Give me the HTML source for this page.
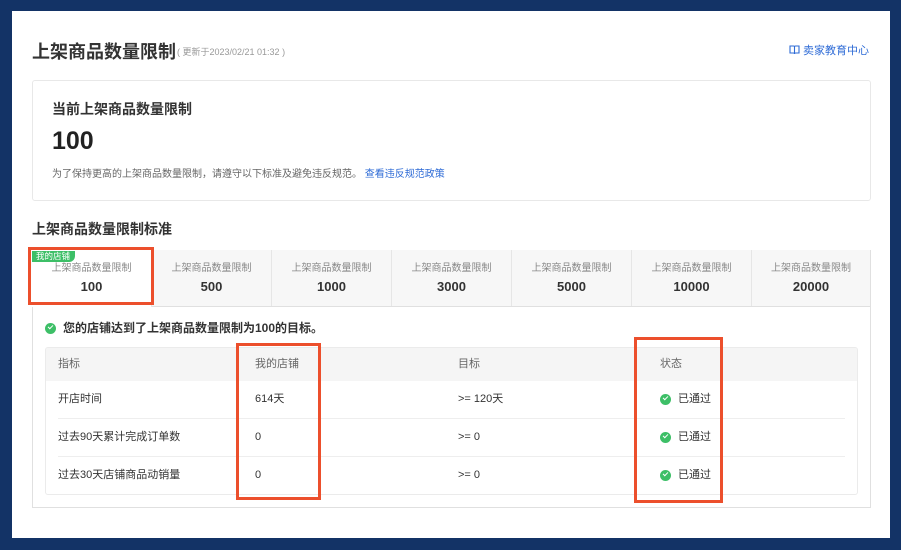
<!DOCTYPE html>
<html><head><meta charset="utf-8"><style>
*{margin:0;padding:0;box-sizing:border-box}
body{width:901px;height:550px;background:#133366;font-family:"Liberation Sans","Noto Sans CJK SC",sans-serif;position:relative;overflow:hidden;color:#333}
.a{position:absolute;white-space:nowrap}
.panel{position:absolute;left:12px;top:11px;width:878px;height:527px;background:#fff}
.red{position:absolute;border:3px solid #ec4f2c}
.tab{position:absolute;top:250px;width:120px;height:57px;background:#f7f7f7;border-right:1px solid #e6e6e6;text-align:center}
.tab .l{font-size:10px;color:#888;margin-top:12px;line-height:13px}
.tab .n{font-size:13px;color:#333;margin-top:4px;line-height:16px;font-weight:bold}
.chk{display:inline-block;width:11px;height:11px;border-radius:50%;background:#3dbf67;position:relative;margin-right:7px;flex:none}
.chk:after{content:"";position:absolute;left:3px;top:2.5px;width:4px;height:2px;border-left:1.5px solid #fff;border-bottom:1.5px solid #fff;transform:rotate(-45deg)}
.cell{position:absolute;font-size:11px;color:#333;line-height:14px;height:14px;display:flex;align-items:center;white-space:nowrap}
</style></head><body>
<div class="panel"></div>
<div class="a" style="left:32px;top:40px;font-size:18px;line-height:24px;color:#333;font-weight:bold">上架商品数量限制</div>
<div class="a" style="left:177px;top:46px;font-size:9px;line-height:12px;color:#999">( 更新于2023/02/21 01:32 )</div>
<div class="a" style="left:789px;top:44px;font-size:11px;line-height:14px;color:#2e6bd6"><svg width="11" height="10" viewBox="0 0 11 10" style="vertical-align:-1px"><path d="M1 1h3.5c.6 0 1 .4 1 1v7c0-.6-.4-1-1-1H1zM10 1H6.5c-.6 0-1 .4-1 1v7c0-.6.4-1 1-1H10z" fill="none" stroke="#2e6bd6" stroke-width="1.1"/></svg> 卖家教育中心</div>
<div style="position:absolute;left:32px;top:80px;width:839px;height:121px;border:1px solid #e8e8e8;border-radius:3px"></div>
<div class="a" style="left:52px;top:100px;font-size:14px;line-height:18px;color:#333;font-weight:bold">当前上架商品数量限制</div>
<div class="a" style="left:52px;top:126px;font-size:25px;line-height:30px;color:#222;font-weight:bold">100</div>
<div class="a" style="left:52px;top:168px;font-size:10px;line-height:14px;color:#666">为了保持更高的上架商品数量限制，请遵守以下标准及避免违反规范。 <span style="color:#2e6bd6">查看违反规范政策</span></div>
<div class="a" style="left:32px;top:220px;font-size:14px;line-height:18px;color:#333;font-weight:bold">上架商品数量限制标准</div>
<div style="position:absolute;left:32px;top:250px;width:839px;height:258px;border:1px solid #e0e0e0"></div>
<div class="tab" style="left:32px;background:#fff"><div class="l">上架商品数量限制</div><div class="n">100</div></div>
<div class="tab" style="left:152px"><div class="l">上架商品数量限制</div><div class="n">500</div></div>
<div class="tab" style="left:272px"><div class="l">上架商品数量限制</div><div class="n">1000</div></div>
<div class="tab" style="left:392px"><div class="l">上架商品数量限制</div><div class="n">3000</div></div>
<div class="tab" style="left:512px"><div class="l">上架商品数量限制</div><div class="n">5000</div></div>
<div class="tab" style="left:632px"><div class="l">上架商品数量限制</div><div class="n">10000</div></div>
<div class="tab" style="left:752px;width:118px;border-right:none"><div class="l">上架商品数量限制</div><div class="n">20000</div></div>
<div style="position:absolute;left:152px;top:306px;width:718px;height:1px;background:#e0e0e0"></div>
<div class="a" style="left:32px;top:251px;height:11px;padding:0 5px 0 4px;background:#3dbf67;color:#fff;font-size:8.5px;line-height:11px;border-radius:0 0 6px 0">我的店铺</div>
<div class="cell" style="left:45px;top:321px;font-size:12px;color:#333;font-weight:bold"><span class="chk"></span>您的店铺达到了上架商品数量限制为100的目标。</div>
<div style="position:absolute;left:45px;top:347px;width:813px;height:148px;border:1px solid #ebebeb;border-radius:3px;overflow:hidden"><div style="height:33px;background:#f5f5f5"></div></div>
<div style="position:absolute;left:58px;top:418px;width:787px;height:1px;background:#eee"></div>
<div style="position:absolute;left:58px;top:456px;width:787px;height:1px;background:#eee"></div>
<div class="cell" style="left:58px;top:357px;color:#666">指标</div>
<div class="cell" style="left:255px;top:357px;color:#666">我的店铺</div>
<div class="cell" style="left:458px;top:357px;color:#666">目标</div>
<div class="cell" style="left:660px;top:357px;color:#666">状态</div>
<div class="cell" style="left:58px;top:392px">开店时间</div>
<div class="cell" style="left:255px;top:392px">614天</div>
<div class="cell" style="left:458px;top:392px">&gt;= 120天</div>
<div class="cell" style="left:660px;top:392px"><span class="chk"></span>已通过</div>
<div class="cell" style="left:58px;top:430px">过去90天累计完成订单数</div>
<div class="cell" style="left:255px;top:430px">0</div>
<div class="cell" style="left:458px;top:430px">&gt;= 0</div>
<div class="cell" style="left:660px;top:430px"><span class="chk"></span>已通过</div>
<div class="cell" style="left:58px;top:468px">过去30天店铺商品动销量</div>
<div class="cell" style="left:255px;top:468px">0</div>
<div class="cell" style="left:458px;top:468px">&gt;= 0</div>
<div class="cell" style="left:660px;top:468px"><span class="chk"></span>已通过</div>
<div class="red" style="left:28px;top:247px;width:126px;height:58px"></div>
<div class="red" style="left:236px;top:343px;width:85px;height:157px"></div>
<div class="red" style="left:634px;top:337px;width:89px;height:166px"></div>
</body></html>
